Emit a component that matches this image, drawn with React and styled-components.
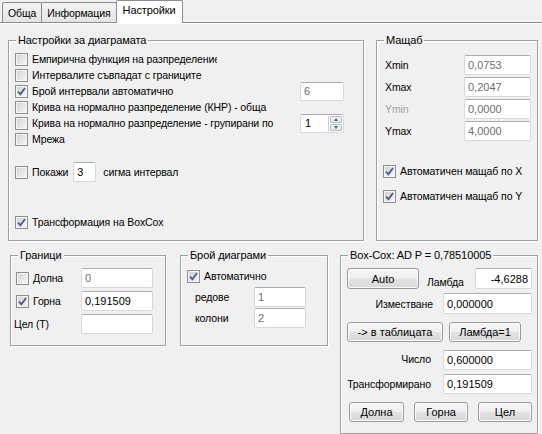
import React from 'react';
import styled, { createGlobalStyle } from 'styled-components';

const GlobalStyle = createGlobalStyle`
  html, body {
    margin: 0;
    padding: 0;
    background: #f0f0f0;
  }
  body {
    font-family: "Liberation Sans", Arial, sans-serif;
    font-size: 10.5px;
    letter-spacing: -0.1px;
    color: #000;
  }
`;

const Window = styled.div`
  width: 542px;
  height: 434px;
  overflow: hidden;
  background: #f0f0f0;
  display: flex;
  flex-direction: column;
`;

const TabStrip = styled.div`
  display: flex;
  align-items: flex-end;
  height: 22px;
  padding-left: 2px;
  position: relative;
  z-index: 1;
`;

const Tab = styled.div`
  box-sizing: border-box;
  height: ${(p) => (p.$active ? 23 : 20)}px;
  margin-bottom: ${(p) => (p.$active ? -1 : 0)}px;
  margin-left: ${(p) => (p.$first ? 0 : -1)}px;
  padding: ${(p) => (p.$active ? '3px 6px 0' : '4px 5px 0')};
  border: 1px solid #898c95;
  border-bottom: none;
  border-radius: 2px 2px 0 0;
  background: ${(p) => (p.$active ? '#fff' : 'linear-gradient(#f3f3f3, #e4e4e4)')};
  font-size: ${(p) => (p.$active ? 11 : 10.5)}px;
  white-space: nowrap;
`;

const Panel = styled.div`
  flex: 1;
  border-top: 1px solid #898c95;
  box-shadow: inset 0 1px 0 #fff;
  padding: 11px 4px 0 8px;
`;

const Row = styled.div`
  display: flex;
  gap: ${(p) => p.$gap}px;
  margin-top: ${(p) => p.$mt || 0}px;
  margin-left: ${(p) => p.$ml || 0}px;
`;

const Group = styled.fieldset`
  box-sizing: border-box;
  margin: 0;
  min-width: 0;
  padding: 0;
  width: ${(p) => p.$w}px;
  height: ${(p) => p.$h}px;
  border: 1px solid #a0a0a0;
  box-shadow: inset 1px 1px 0 #fff, 1px 1px 0 #fff;
`;

const Legend = styled.legend`
  padding: 0 2px;
  margin-left: 7px;
  line-height: 13px;
  font-size: 11px;
  background: #f0f0f0;
  white-space: nowrap;
`;

const Body = styled.div`
  padding: ${(p) => p.$pad};
`;

const Line = styled.div`
  display: flex;
  align-items: center;
  justify-content: ${(p) => (p.$start ? 'flex-start' : 'space-between')};
  height: ${(p) => p.$h || 16}px;
  margin-top: ${(p) => p.$mt || 0}px;
`;

const CheckLabel = styled.label`
  display: flex;
  align-items: center;
  gap: 4px;
  white-space: nowrap;
  min-width: 0;
`;

const Box = styled.span`
  box-sizing: border-box;
  flex: none;
  width: 13px;
  height: 13px;
  border: 1px solid #8e8f8f;
  background: linear-gradient(135deg, #cfcfcf 0%, #e6e6e6 55%, #f7f7f7 100%);
  box-shadow: inset 0 0 0 1px #f4f4f4;
  display: flex;
  align-items: center;
  justify-content: center;
`;

const Text = styled.span`
  display: block;
  white-space: nowrap;
  overflow: ${(p) => (p.$clip ? 'hidden' : 'visible')};
  max-width: ${(p) => (p.$clip ? `${p.$clip}px` : 'none')};
  color: ${(p) => (p.$muted ? '#a2a2a2' : '#000')};
  margin-left: ${(p) => p.$ml || 0}px;
  margin-top: ${(p) => p.$mt || 0}px;
  justify-self: ${(p) => (p.$right ? 'end' : 'start')};
`;

const Field = styled.input`
  box-sizing: border-box;
  width: ${(p) => p.$w}px;
  height: ${(p) => p.$h || 20}px;
  margin: 0;
  margin-left: ${(p) => p.$ml || 0}px;
  padding: 0 3px;
  font: inherit;
  font-size: 11px;
  color: ${(p) => (p.$dim ? '#6d6d6d' : '#000')};
  text-align: ${(p) => (p.$right ? 'right' : 'left')};
  background: #fff;
  border: 1px solid #d5d8de;
  border-top-color: #abadb3;
  border-radius: 2px;
  outline: none;
  flex: none;
`;

const Spin = styled.div`
  box-sizing: border-box;
  width: 44px;
  height: 19px;
  display: flex;
  align-items: center;
  justify-content: space-between;
  background: #fff;
  border: 1px solid #d5d8de;
  border-top-color: #abadb3;
  border-radius: 2px;
  padding: 0 1px 0 4px;
  font-size: 11px;
`;

const SpinButtons = styled.div`
  display: flex;
  flex-direction: column;
  gap: 1px;
  border-left: 1px solid #c8ccd2;
  padding-left: 1px;
`;

const SpinBtn = styled.div`
  box-sizing: border-box;
  width: 12px;
  height: 7px;
  border: 1px solid #b8bcc4;
  border-radius: 1px;
  background: linear-gradient(#f4f6f9, #dfe4ea);
  display: flex;
  align-items: center;
  justify-content: center;

  &::after {
    content: '';
    border-left: 2.5px solid transparent;
    border-right: 2.5px solid transparent;
    ${(p) => (p.$down ? 'border-top: 3px solid #4d6185;' : 'border-bottom: 3px solid #4d6185;')}
  }
`;

const FormGrid = styled.div`
  display: grid;
  grid-template-columns: ${(p) => p.$cols};
  grid-auto-rows: ${(p) => p.$rh || 20}px;
  row-gap: ${(p) => p.$rg || 0}px;
  column-gap: ${(p) => p.$cg || 0}px;
  align-items: center;
  margin-top: ${(p) => p.$mt || 0}px;
  margin-left: ${(p) => p.$ml || 0}px;
`;

const Button = styled.button`
  box-sizing: border-box;
  width: ${(p) => p.$w}px;
  height: ${(p) => p.$h || 20}px;
  margin: 0;
  padding: 0;
  font: inherit;
  font-size: 11px;
  color: #000;
  border: 1px solid #9a9a9a;
  border-radius: 3px;
  background: linear-gradient(#f6f6f6 0%, #eeeeee 48%, #e2e2e2 52%, #d8d8d8 100%);
  box-shadow: inset 0 0 0 1px #fbfbfb;
  flex: none;
`;

const BtnRow = styled.div`
  display: flex;
  align-items: center;
  gap: ${(p) => p.$gap || 0}px;
  margin-top: ${(p) => p.$mt || 0}px;
  margin-left: ${(p) => p.$ml || 0}px;
`;

function Check({ checked, children, clip }) {
  return (
    <CheckLabel>
      <Box>
        {checked && (
          <svg width="9" height="9" viewBox="0 0 9 9">
            <path d="M1 4.6 L3.4 7.2 L8 1" fill="none" stroke="#4b5f8c" strokeWidth="1.9" />
          </svg>
        )}
      </Box>
      <Text $clip={clip}>{children}</Text>
    </CheckLabel>
  );
}

export default function App() {
  return (
    <Window>
      <GlobalStyle />
      <TabStrip>
        <Tab $first>Обща</Tab>
        <Tab>Информация</Tab>
        <Tab $active>Настройки</Tab>
      </TabStrip>
      <Panel>
        <Row $gap={12}>
          <Group $w={356} $h={207}>
            <Legend>Настройки за диаграмата</Legend>
            <Body $pad="4px 19px 0 6px">
              <Line>
                <Check clip={185}>Емпирична функция на разпределение</Check>
              </Line>
              <Line>
                <Check>Интервалите съвпадат с границите</Check>
              </Line>
              <Line>
                <Check checked>Брой интервали автоматично</Check>
                <Field $w={44} $h={19} $dim readOnly value="6" />
              </Line>
              <Line>
                <Check>Крива на нормално разпределение (КНР) - обща</Check>
              </Line>
              <Line>
                <Check>Крива на нормално разпределение - групирани по</Check>
                <Spin>
                  <span>1</span>
                  <SpinButtons>
                    <SpinBtn />
                    <SpinBtn $down />
                  </SpinButtons>
                </Spin>
              </Line>
              <Line>
                <Check>Мрежа</Check>
              </Line>
              <Line $h={20} $mt={15} $start>
                <Check>Покажи</Check>
                <Field $w={23} $ml={5} readOnly value="3" />
                <Text $ml={7}>сигма интервал</Text>
              </Line>
              <Line $mt={32}>
                <Check checked>Трансформация на BoxCox</Check>
              </Line>
            </Body>
          </Group>
          <Group $w={162} $h={207}>
            <Legend>Мащаб</Legend>
            <Body $pad="8px 6px 0 6px">
              <FormGrid $cols="1fr 67px" $rg={2} $ml={2}>
                <Text>Xmin</Text>
                <Field $w={67} $dim readOnly value="0,0753" />
                <Text>Xmax</Text>
                <Field $w={67} $dim readOnly value="0,2047" />
                <Text $muted>Ymin</Text>
                <Field $w={67} $dim readOnly value="0,0000" />
                <Text>Ymax</Text>
                <Field $w={67} $dim readOnly value="4,0000" />
              </FormGrid>
              <Line $mt={22}>
                <Check checked>Автоматичен мащаб по X</Check>
              </Line>
              <Line $mt={9}>
                <Check checked>Автоматичен мащаб по Y</Check>
              </Line>
            </Body>
          </Group>
        </Row>

        <Row $gap={0} $mt={8} $ml={2}>
          <Group $w={156} $h={97}>
            <Legend>Граници</Legend>
            <Body $pad="6px 12px 0 5px">
              <FormGrid $cols="1fr 72px" $rg={3}>
                <Check>Долна</Check>
                <Field $w={72} $dim readOnly value="0" />
                <Check checked>Горна</Check>
                <Field $w={72} readOnly value="0,191509" />
                <Text $ml={-2}>Цел (T)</Text>
                <Field $w={72} readOnly value="" />
              </FormGrid>
            </Body>
          </Group>
          <Group $w={148} $h={97} style={{ marginLeft: 14 }}>
            <Legend>Брой диаграми</Legend>
            <Body $pad="6px 21px 0 6px">
              <Line>
                <Check checked>Автоматично</Check>
              </Line>
              <FormGrid $cols="1fr 52px" $rg={1} $mt={3} $ml={8}>
                <Text>редове</Text>
                <Field $w={52} $dim readOnly value="1" />
                <Text>колони</Text>
                <Field $w={52} $dim readOnly value="2" />
              </FormGrid>
            </Body>
          </Group>
          <Group $w={198} $h={185} style={{ marginLeft: 12 }}>
            <Legend>Box-Cox: AD P = 0,78510005</Legend>
            <Body $pad="6px 5px 0 6px">
              <BtnRow>
                <Button $w={72} $h={21}>Auto</Button>
                <Text $ml={8} $mt={6}>Ламбда</Text>
                <Field $w={57} $h={21} $right style={{ marginLeft: 'auto' }} readOnly value="-4,6288" />
              </BtnRow>
              <FormGrid $cols="86px 1fr" $cg={10} $rh={21} $mt={4}>
                <Text $right>Изместване</Text>
                <Field $w={89} $h={21} readOnly value="0,000000" />
              </FormGrid>
              <BtnRow $gap={6} $mt={8}>
                <Button $w={96}>-&gt; в таблицата</Button>
                <Button $w={72}>Ламбда=1</Button>
              </BtnRow>
              <FormGrid $cols="84px 1fr" $cg={12} $rg={4} $mt={8}>
                <Text $right $mt={-3}>Число</Text>
                <Field $w={89} readOnly value="0,600000" />
                <Text $right>Трансформирано</Text>
                <Field $w={89} readOnly value="0,191509" />
              </FormGrid>
              <BtnRow $gap={10} $mt={8} $ml={2}>
                <Button $w={55}>Долна</Button>
                <Button $w={54}>Горна</Button>
                <Button $w={54}>Цел</Button>
              </BtnRow>
            </Body>
          </Group>
        </Row>
      </Panel>
    </Window>
  );
}
